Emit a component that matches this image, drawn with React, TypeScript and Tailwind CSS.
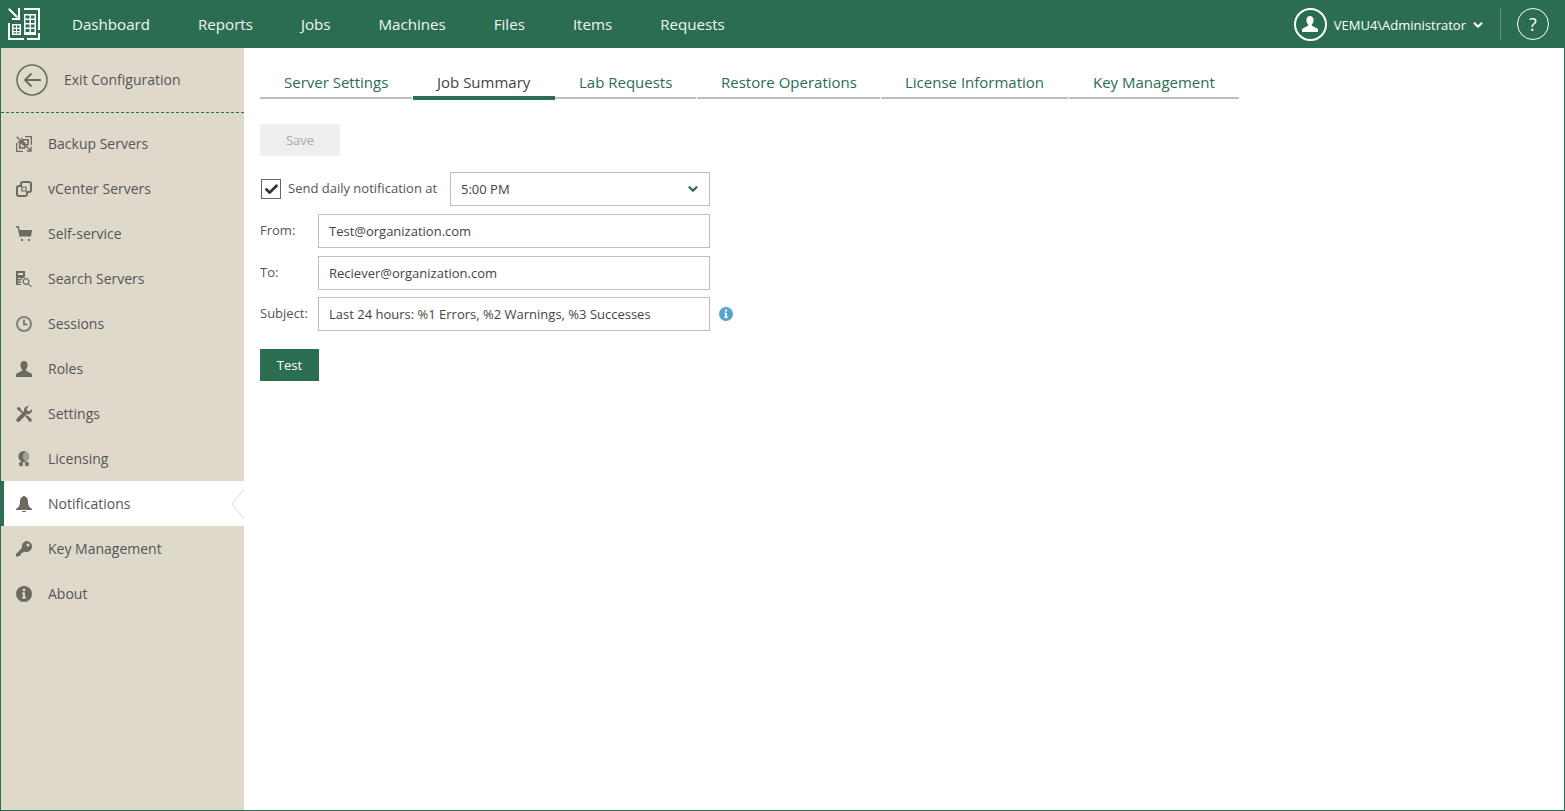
import { Check, ChevronDown } from "lucide-react";
import type { ReactNode } from "react";

const NAV_ITEMS = ["Dashboard", "Reports", "Jobs", "Machines", "Files", "Items", "Requests"];

const TABS = [
  { label: "Server Settings", width: "w-[152px]" },
  { label: "Job Summary", width: "w-[142px]", active: true },
  { label: "Lab Requests", width: "w-[141px]" },
  { label: "Restore Operations", width: "w-[183px]" },
  { label: "License Information", width: "w-[187px]" },
  { label: "Key Management", width: "w-[170px]" },
];

function Glyph({ children }: { children: ReactNode }) {
  return (
    <svg viewBox="0 0 16 16" className="w-4 h-4 fill-[#6f6a5f] shrink-0">
      {children}
    </svg>
  );
}

const SIDE_ITEMS: { label: string; active?: boolean; icon: ReactNode }[] = [
  {
    label: "Backup Servers",
    icon: (
      <svg viewBox="0 0 16 16" className="w-4 h-4 shrink-0 fill-none stroke-[#6f6a5f] stroke-[1.3]">
        <path d="M9 .7h6.300V9M.7 7v8.300H7" />
        <path d="M.7.7l5 5M6 1.800V6H1.800M10 10l5 5M15 10.800V15h-4.200" />
        <path d="M7 3.800h5v5H7zM3.800 7h5v5h-5z" strokeWidth="1.600" />
      </svg>
    ),
  },
  {
    label: "vCenter Servers",
    icon: (
      <svg viewBox="0 0 16 16" className="w-4 h-4 shrink-0 fill-none stroke-[#6f6a5f] stroke-2">
        <path d="M5 5V3a2 2 0 0 1 2-2h6a2 2 0 0 1 2 2v6a2 2 0 0 1-2 2h-2v2a2 2 0 0 1-2 2H3a2 2 0 0 1-2-2V7a2 2 0 0 1 2-2z" />
        <path d="M6 6h4v4H6z" strokeWidth="1.200" />
      </svg>
    ),
  },
  {
    label: "Self-service",
    icon: (
      <Glyph>
        <path d="M0 0h2.800l.8 4H16l-1 6.500H5.200L3.800 11.500 1.600 1.500H0zM5 13h2v2H5zM12 13h2v2h-2z" />
      </Glyph>
    ),
  },
  {
    label: "Search Servers",
    icon: (
      <Glyph>
        <path d="M0 0h9v6.200A5 5 0 0 0 5.600 14H0zm2 2v2h5V2zm0 5v1h3V7zm0 2.500v1h3v-1zm0 2.500v1h3v-1z" fillRule="evenodd" />
        <path d="M10 7a3.500 3.500 0 0 1 2.700 5.700L16 15.300l-.8.700-3.200-2.600A3.500 3.500 0 1 1 10 7zm0 1.300a2.200 2.200 0 1 0 0 4.400 2.200 2.200 0 0 0 0-4.400z" fillRule="evenodd" />
      </Glyph>
    ),
  },
  {
    label: "Sessions",
    icon: (
      <svg viewBox="0 0 16 16" className="w-4 h-4 shrink-0 fill-none stroke-[#85817a]">
        <circle cx="8" cy="8" r="7" strokeWidth="2" />
        <path d="M8 3.500V8.500H11.500" strokeWidth="1.600" stroke="#6f6a5f" />
      </svg>
    ),
  },
  {
    label: "Roles",
    icon: (
      <Glyph>
        <path d="M8 0c2.200 0 3.600 1.700 3.600 4 0 2-.9 3.600-1.800 4.400v1.100L16 13v3H0v-3l6.200-3.500V8.400C5.300 7.600 4.400 6 4.400 4 4.400 1.700 5.800 0 8 0z" />
      </Glyph>
    ),
  },
  {
    label: "Settings",
    icon: (
      <Glyph>
        <path d="M.8 2.300 2.300.8 4.500 2l.4 1.700 3.200 3.200-1.400 1.400-3.200-3.200L2 4.500zM12 0a4 4 0 0 1 1 .1l-2.300 2.300.5 2.400 2.400.5L16 3a4 4 0 0 1-5 4.900L3.700 15.300a1.900 1.900 0 0 1-2.900-2.500L8.100 5A4 4 0 0 1 12 0zM9.500 10.400l1.600-1.500 4.400 4.400a1.600 1.600 0 0 1-2.200 2.200z" />
      </Glyph>
    ),
  },
  {
    label: "Licensing",
    icon: (
      <Glyph>
        <circle cx="8" cy="5.500" r="5.500" fill="#a5a196" />
        <path d="M8 0a5.500 5.500 0 0 0 0 11c1 0 1.500-.2 1.500-.2A6 6 0 0 1 7 5.500 6 6 0 0 1 9.500.2S9 0 8 0z" />
        <path d="M5.500 10.500 7.500 11.500 6.500 13l.8 2-2.300-.3-1 1.300-.8-2.700L2.800 12zM10.500 10.500 8.500 11.500l1 1.500-.8 2 2.300-.3 1 1.300.8-2.700 .4-1.300z" />
      </Glyph>
    ),
  },
  {
    label: "Notifications",
    active: true,
    icon: (
      <Glyph>
        <path d="M6.800.8a1.200 1.200 0 0 1 2.400 0C11.500 1.500 12 3.300 12 6c0 3 1 5 4 7v1H0v-1c3-2 4-4 4-7 0-2.700.5-4.500 2.800-5.200zM6 15h4a2 2 0 0 1-4 0z" />
      </Glyph>
    ),
  },
  {
    label: "Key Management",
    icon: (
      <Glyph>
        <path d="M10.500 0A5.500 5.500 0 1 1 8 10.400L6.500 12H5v1.500L3.500 15H2l-1 1-1-1v-2l6-6.200A5.500 5.500 0 0 1 10.500 0zM12 2.500a1.500 1.500 0 1 0 0 3 1.500 1.500 0 0 0 0-3z" fillRule="evenodd" />
      </Glyph>
    ),
  },
  {
    label: "About",
    icon: (
      <Glyph>
        <path d="M8 0a8 8 0 1 1 0 16A8 8 0 0 1 8 0zM6.800 2.800v2.400h2.400V2.800zM6 6.500V8h1v3H6v1.500h4V11H9V6.500z" fillRule="evenodd" />
      </Glyph>
    ),
  },
];

function Logo() {
  return (
    <svg viewBox="0 0 32 32" className="w-8 h-8 fill-white">
      <path d="M10 0h2v12H4v-2h6zM0 1.500 1.500 0 10 8.500 8.500 10z" />
      <path d="M16 0h16v22h-2V2H16zM30 25h2v7H19v-2h11zM0 15h2v15h14v2H0z" />
      <path d="M16 6h12v21H16zm1.500 1.500v3h4v-3zm5.500 0v3h3.500v-3zm-5.500 4.500v3h4v-3zm5.500 0v3h3.500v-3zm-5.500 4.500v3h4v-3zm5.500 0v3h3.500v-3zm-5.500 4.500v3h4v-3zm5.500 0v3h3.500v-3z" fillRule="evenodd" />
      <path d="M4 16h9v11H4zm1.500 1.500v2.300h2.500v-2.300zm3.500 0v2.300h2.500v-2.300zm-3.500 3.500v2h2.500v-2zm3.500 0v2h2.500v-2zm-3.500 3.200v1.300h2.500v-1.300zm3.500 0v1.300h2.500v-1.300z" fillRule="evenodd" />
    </svg>
  );
}

function TextBox({ value }: { value: string }) {
  return (
    <div className="w-[392px] h-[34px] border border-[#bdbdbd] flex items-center pl-[10px] pt-px text-[13px] text-[#444]">
      {value}
    </div>
  );
}

export default function App() {
  return (
    <div className="w-[1565px] h-[811px] flex flex-col bg-white overflow-hidden font-['Open_Sans',sans-serif] border-x border-b border-[#2a6e50]">
      {/* Top bar */}
      <header className="h-12 -mx-px bg-[#2b6d51] flex items-center text-white shrink-0">
        <div className="w-[72px] pl-2 shrink-0">
          <Logo />
        </div>
        <nav className="flex gap-12 pt-px text-[15.120px] text-[#f2f5f3]">
          {NAV_ITEMS.map((item) => (
            <span key={item}>{item}</span>
          ))}
        </nav>
        <div className="ml-auto flex items-center text-[13px]">
          <div className="w-[33px] h-[33px] rounded-full border-2 border-white flex items-center justify-center">
            <svg viewBox="0 0 16 16" className="w-4 h-4 fill-white">
              <path d="M8 0c2.200 0 3.600 1.700 3.600 4 0 2-.9 3.600-1.800 4.400v1.100L16 13v3H0v-3l6.200-3.500V8.400C5.300 7.600 4.400 6 4.400 4 4.400 1.700 5.800 0 8 0z" />
            </svg>
          </div>
          <span className="ml-[7px] pt-[3px]">VEMU4\Administrator</span>
          <ChevronDown size={14} strokeWidth={3.500} className="ml-[5px] mt-[2px]" />
          <div className="w-px h-8 bg-[#5c9079] ml-[15px]" />
          <div className="w-8 h-8 rounded-full border-[1.500px] border-white flex items-center justify-center text-[18px] ml-4 mr-4">
            ?
          </div>
        </div>
      </header>

      <div className="flex flex-1 min-h-0">
        {/* Sidebar */}
        <aside className="w-[243px] bg-[#dfd9cc] shrink-0 text-[14px] text-[#555]">
          <div className="h-[65px] border-b border-dashed border-[#2b6d51] flex items-center pl-[15px]">
            <svg viewBox="0 0 32 32" className="w-8 h-8 fill-none stroke-[#6f6a5f] stroke-2">
              <circle cx="16" cy="16" r="15" strokeWidth="1.600" />
              <path d="M25 16H9M15.500 9.500 9 16l6.500 6.500" />
            </svg>
            <span className="ml-4 -mt-[2px]">Exit Configuration</span>
          </div>
          <ul className="mt-2">
            {SIDE_ITEMS.map((item) => (
              <li
                key={item.label}
                className={
                  item.active
                    ? "relative h-[45px] flex items-center pl-[15px] bg-white border-l-[3px] border-[#2b6d51]"
                    : "h-[45px] flex items-center pl-[15px]"
                }
              >
                <span className={item.active ? "w-8 -ml-[3px]" : "w-8"}>{item.icon}</span>
                <span>{item.label}</span>
                {item.active && (
                  <svg viewBox="0 0 13 30" className="absolute right-0 top-[8px] w-[13px] h-[30px] fill-none stroke-[#dfd9cc]">
                    <path d="M12.500 0V1L1 15l11.500 14v1" />
                  </svg>
                )}
              </li>
            ))}
          </ul>
        </aside>

        {/* Main */}
        <main className="flex-1 pl-4 pt-[21px] text-[13px] text-[#555]">
          <div className="flex gap-px h-[31px]">
            {TABS.map((tab) => (
              <div
                key={tab.label}
                className={
                  tab.active
                    ? `${tab.width} -mr-px pl-6 pt-[2px] text-[15px] text-[#444] border-b-[4px] border-[#2b6d51]`
                    : `${tab.width} pl-6 pt-[2px] text-[15px] text-[#2b6d51] border-b-2 border-[#bdbdbd] h-[30px]`
                }
              >
                {tab.label}
              </div>
            ))}
          </div>

          <div className="mt-6 w-20 h-8 pt-px bg-[#eeeeee] text-[#a8a8a8] flex items-center justify-center">Save</div>

          <div className="mt-4 flex items-center h-[34px]">
            <span className="ml-px w-5 h-5 border border-[#666] flex items-center justify-center">
              <Check size={15} strokeWidth={4.500} className="text-[#333]" />
            </span>
            <span className="ml-[7px] w-[162px]">Send daily notification at</span>
            <div className="w-[260px] h-[34px] border border-[#bdbdbd] flex items-center justify-between pl-[10px] pr-[9px] text-[#444]">
              <span className="pt-px">5:00 PM</span>
              <ChevronDown size={14} strokeWidth={4} className="text-[#2b6d51]" />
            </div>
          </div>

          <div className="mt-2 flex items-center">
            <span className="w-[58px] -mt-px">From:</span>
            <TextBox value="Test@organization.com" />
          </div>
          <div className="mt-2 flex items-center">
            <span className="w-[58px] -mt-px">To:</span>
            <TextBox value="Reciever@organization.com" />
          </div>
          <div className="mt-[7px] flex items-center">
            <span className="w-[58px] -mt-px">Subject:</span>
            <TextBox value="Last 24 hours: %1 Errors, %2 Warnings, %3 Successes" />
            <svg viewBox="0 0 16 16" className="w-[14px] h-[14px] ml-[9px]">
              <circle cx="8" cy="8" r="8" fill="#55a5cc" />
              <path d="M6.800 2.800h2.400v2.400H6.800zM6 6.500h3V11h1v1.500H6V11h1V8H6z" fill="#fff" />
            </svg>
          </div>

          <div className="mt-[18px] w-[59px] h-8 pt-px bg-[#2b6d51] text-white flex items-center justify-center">Test</div>
        </main>
      </div>
    </div>
  );
}
